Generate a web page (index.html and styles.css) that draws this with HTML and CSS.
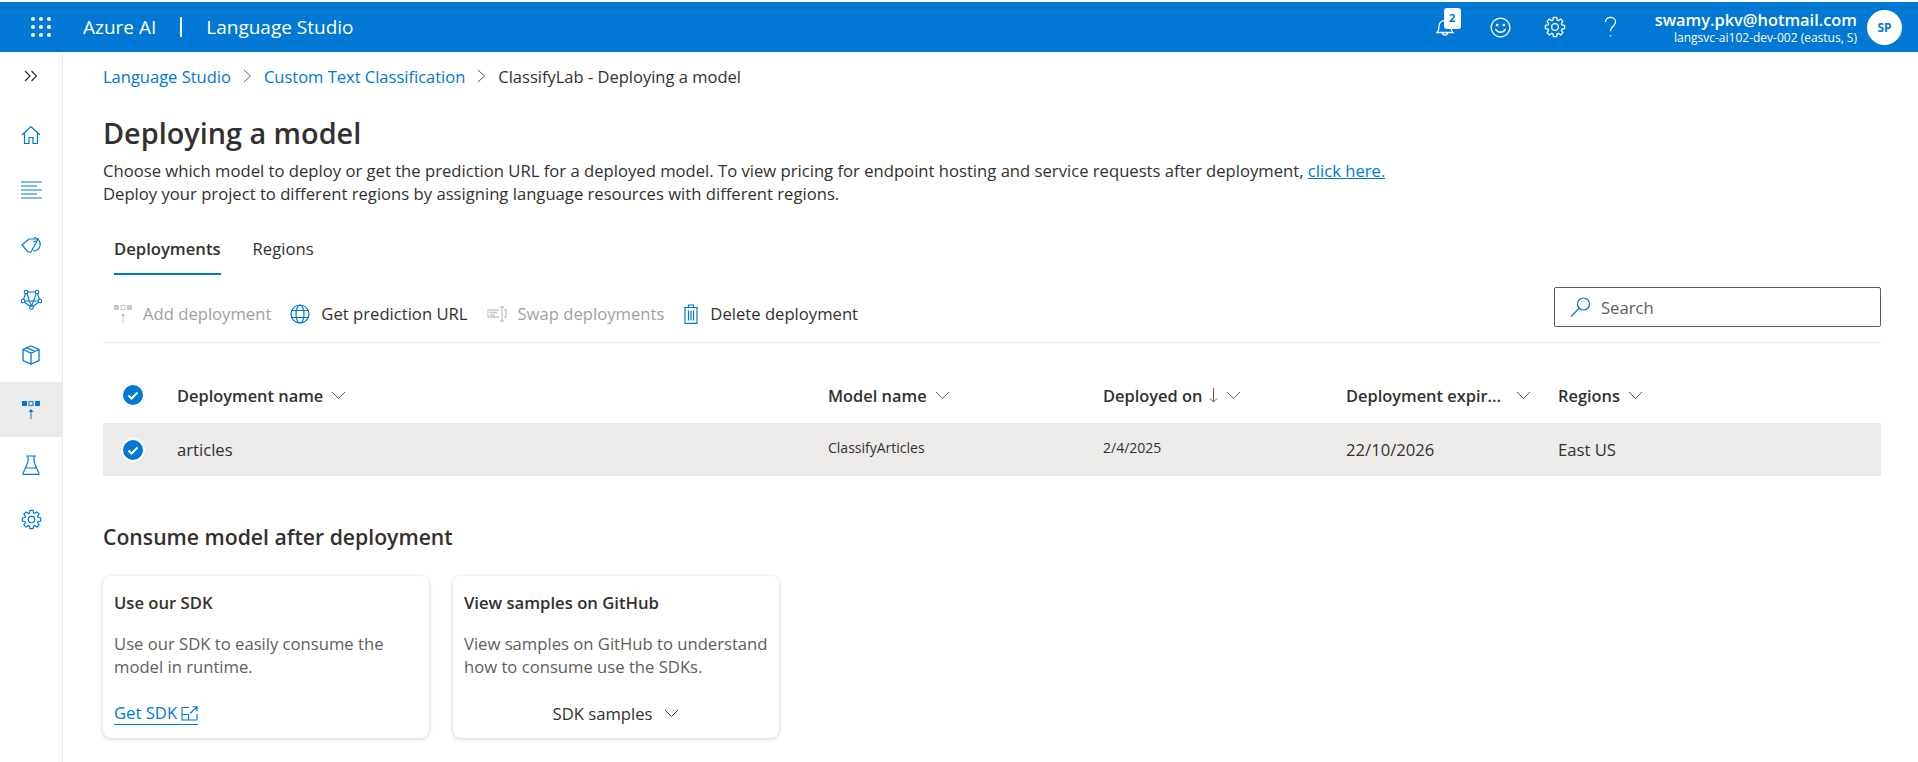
FILE: index.html
```html
<!DOCTYPE html>
<html lang="en">
<head>
  <meta charset="UTF-8">
  <title>Language Studio</title>
  <link rel="stylesheet" href="styles.css">
</head>
<body>
  <svg class="icon-defs" width="0" height="0">
    <symbol id="gear" viewBox="-13 -13 26 26">
      <polygon points="-2.49,-8.13 -2,-11.33 2,-11.33 2.49,-8.13 3.99,-7.51 6.6,-9.42 9.42,-6.6 7.51,-3.99 8.13,-2.49 11.33,-2 11.33,2 8.13,2.49 7.51,3.99 9.42,6.6 6.6,9.42 3.99,7.51 2.49,8.13 2,11.33 -2,11.33 -2.49,8.13 -3.99,7.51 -6.6,9.42 -9.42,6.6 -7.51,3.99 -8.13,2.49 -11.33,2 -11.33,-2 -8.13,-2.49 -7.51,-3.99 -9.42,-6.6 -6.6,-9.42 -3.99,-7.51" stroke-linejoin="round"/>
      <circle cx="0" cy="0" r="4"/>
    </symbol>
  </svg>

  <header class="topbar">
    <svg class="waffle" width="20" height="20" viewBox="0 0 20 20" fill="#fff">
      <circle cx="2" cy="2" r="2"/><circle cx="10" cy="2" r="2"/><circle cx="18" cy="2" r="2"/>
      <circle cx="2" cy="10" r="2"/><circle cx="10" cy="10" r="2"/><circle cx="18" cy="10" r="2"/>
      <circle cx="2" cy="18" r="2"/><circle cx="10" cy="18" r="2"/><circle cx="18" cy="18" r="2"/>
    </svg>
    <span class="brand">Azure AI</span>
    <span class="brand-sep"></span>
    <span class="brand">Language Studio</span>
    <div class="top-icons">
      <div class="top-icon bell">
        <svg width="18" height="20" viewBox="0 0 18 20" fill="none" stroke="#fff" stroke-width="1.300">
          <path d="M1 15.500c1.500-1.500 2-3.500 2-6 0-3.500 2.500-6 6-6s6 2.500 6 6c0 2.500.5 4.500 2 6z"/>
          <path d="M6.500 15.500c0 3.500 5 3.500 5 0"/>
        </svg>
        <span class="badge">2</span>
      </div>
      <div class="top-icon">
        <svg width="21" height="21" viewBox="0 0 22 22" fill="none" stroke="#fff" stroke-width="1.400">
          <circle cx="11" cy="11" r="9.800"/>
          <path d="M6 13c2.500 4 7.500 4 10 0" stroke-linecap="round"/>
          <circle cx="7.500" cy="8.500" r=".8" fill="#fff"/><circle cx="14.500" cy="8.500" r=".8" fill="#fff"/>
        </svg>
      </div>
      <div class="top-icon">
        <svg width="22" height="22" fill="none" stroke="#fff" stroke-width="1.500"><use href="#gear"/></svg>
      </div>
      <div class="top-icon">
        <svg width="13" height="22" viewBox="0 0 14 24" fill="none" stroke="#fff" stroke-width="1.400">
          <path d="M1.500 6.500C1.500 3.500 4 1.500 7 1.500s5.500 2 5.500 5c0 4.500-5.500 4.500-5.500 10"/>
          <circle cx="7" cy="21.500" r=".9" fill="#fff" stroke="none"/>
        </svg>
      </div>
    </div>
    <div class="account">
      <div class="account-mail">swamy.pkv@hotmail.com</div>
      <div class="account-res">langsvc-ai102-dev-002 (eastus, S)</div>
    </div>
    <div class="avatar">SP</div>
  </header>

  <div class="shell">
    <nav class="sidenav">
      <div class="nav-toggle">
        <svg width="14" height="12" viewBox="0 0 14 12" fill="none" stroke="#252423" stroke-width="1.100"><path d="M1 1l5 5-5 5M7.500 1l5 5-5 5"/></svg>
      </div>
      <div class="nav-item">
        <svg width="20" height="20" viewBox="0 0 20 20" fill="none" stroke="#0078d4" stroke-width="1.200"><path d="M1 10l9-8.500 9 8.500M3.500 8v10.500h4.500v-6h4v6h4.500V8"/></svg>
      </div>
      <div class="nav-item">
        <svg width="21" height="18" viewBox="0 0 21 18" stroke="#0078d4" stroke-width="1.100"><path d="M0 1h20.500M0 5h16M0 9h20.500M0 13h16M0 17h20.500"/></svg>
      </div>
      <div class="nav-item">
        <svg width="21" height="17" viewBox="0 0 21 17" fill="none" stroke="#0078d4" stroke-width="1.200"><path d="M1 9l7-6h9l-7 13h-3z"/><path d="M13 1.500a6 6 0 1 1-1 13.500M12.500 6l3-1"/></svg>
      </div>
      <div class="nav-item">
        <svg width="21" height="21" viewBox="0 0 21 21" fill="none" stroke="#0078d4" stroke-width="1.100"><circle cx="5" cy="3" r="1.800"/><circle cx="16" cy="3" r="1.800"/><circle cx="2" cy="12" r="1.800"/><circle cx="19" cy="12" r="1.800"/><circle cx="10.500" cy="18.500" r="1.800"/><path d="M6.500 3h8M4.500 4.800L2.500 10M16.500 4.800l2 5.200M3.500 13.200l5.500 4.300M17.500 13.200L12 17.500M3.800 12h13.400M5.800 4.500l4.700 13M15.200 4.500l-4.700 13"/></svg>
      </div>
      <div class="nav-item">
        <svg width="18" height="20" viewBox="0 0 18 20" fill="none" stroke="#0078d4" stroke-width="1.300"><path d="M9 1l8 3.500v11L9 19l-8-3.500v-11zM1 4.500L9 8l8-3.500M9 8v11M5 2.800l8 3.500"/></svg>
      </div>
      <div class="nav-item active">
        <svg width="18" height="18" viewBox="0 0 18 18" fill="#0078d4"><rect y="0" width="5" height="5"/><rect x="7" y=".6" width="4" height="3.800" fill="none" stroke="#0078d4"/><rect x="13" y="0" width="5" height="5"/><path d="M9 8l-2.500 3h2V18h1v-7h2z"/></svg>
      </div>
      <div class="nav-item">
        <svg width="18" height="20" viewBox="0 0 18 20" fill="none" stroke="#0078d4" stroke-width="1.200"><path d="M4 1h10M6 1v6L1 18.500c-.2.300 0 .9.500.9h15c.500 0 .7-.6.500-.9L12 7V1M3.500 13h11"/></svg>
      </div>
      <div class="nav-item">
        <svg width="21" height="21" fill="none" stroke="#0078d4" stroke-width="1.500"><use href="#gear"/></svg>
      </div>
    </nav>

    <main class="content">
      <div class="crumbs">
        <a class="crumb-link">Language Studio</a>
        <svg class="crumb-sep" width="9" height="14" viewBox="0 0 9 14" fill="none" stroke="#605e5c"><path d="M1 1l6.500 6L1 13"/></svg>
        <a class="crumb-link">Custom Text Classification</a>
        <svg class="crumb-sep" width="9" height="14" viewBox="0 0 9 14" fill="none" stroke="#605e5c"><path d="M1 1l6.500 6L1 13"/></svg>
        <span class="crumb-current">ClassifyLab - Deploying a model</span>
      </div>

      <h1 class="page-title">Deploying a model</h1>
      <p class="page-desc">Choose which model to deploy or get the prediction URL for a deployed model. To view pricing for endpoint hosting and service requests after deployment, <a class="link">click here.</a><br>Deploy your project to different regions by assigning language resources with different regions.</p>

      <div class="tabs">
        <div class="tab selected">Deployments</div>
        <div class="tab">Regions</div>
      </div>

      <div class="commandbar">
        <div class="cmd disabled">
          <svg width="18" height="18" viewBox="0 0 18 18" fill="#c8c6c4"><rect y="0" width="5" height="5"/><rect x="7" y=".6" width="4" height="3.800" fill="none" stroke="#c8c6c4"/><rect x="13" y="0" width="5" height="5"/><path d="M9 8l-2.500 3h2V18h1v-7h2z"/></svg>
          <span>Add deployment</span>
        </div>
        <div class="cmd">
          <svg width="20" height="20" viewBox="0 0 20 20" fill="none" stroke="#0078d4" stroke-width="1.200"><circle cx="10" cy="10" r="9"/><ellipse cx="10" cy="10" rx="4" ry="9"/><path d="M1.800 6.500h16.400M1.800 13.500h16.400"/></svg>
          <span>Get prediction URL</span>
        </div>
        <div class="cmd disabled">
          <svg width="20" height="16" viewBox="0 0 20 16" fill="none" stroke="#c8c6c4" stroke-width="1.300"><path d="M12 4H1v7h11M3 6.500h7M3 9h5M15 1v14M13 1h4M13 15h4M17 4h2v7h-2"/></svg>
          <span>Swap deployments</span>
        </div>
        <div class="cmd">
          <svg width="16" height="20" viewBox="0 0 16 20" fill="none" stroke="#0078d4" stroke-width="1.200"><path d="M1 3.500h14M5.500 3.500V1h5v2.500M2 3.500v15.800h12V3.500M5.500 6.500v10M8 6.500v10M10.500 6.500v10"/></svg>
          <span>Delete deployment</span>
        </div>
        <div class="searchbox">
          <svg width="21" height="20" viewBox="0 0 21 20" fill="none" stroke="#0078d4" stroke-width="1.200"><circle cx="13.500" cy="7" r="6"/><path d="M9 11.500L1 19.500"/></svg>
          <span>Search</span>
        </div>
      </div>

      <div class="grid-row grid-head">
        <div class="check">
          <svg width="20" height="20" viewBox="0 0 20 20"><circle cx="10" cy="10" r="10" fill="#0078d4"/><path d="M5.500 10.500l3 3 6-6" fill="none" stroke="#fff" stroke-width="2"/></svg>
        </div>
        <div class="col-head">Deployment name <svg class="chev" width="15" height="9" viewBox="0 0 15 9" fill="none" stroke="#605e5c"><path d="M1 1l6.500 6.500L14 1"/></svg></div>
        <div class="col-head">Model name <svg class="chev" width="15" height="9" viewBox="0 0 15 9" fill="none" stroke="#605e5c"><path d="M1 1l6.500 6.500L14 1"/></svg></div>
        <div class="col-head">Deployed on
          <svg class="sort-arrow" width="9" height="16" viewBox="0 0 9 16" fill="none" stroke="#605e5c"><path d="M4.500 1v14M1 11.500L4.500 15 8 11.500"/></svg>
          <svg class="chev" width="15" height="9" viewBox="0 0 15 9" fill="none" stroke="#605e5c"><path d="M1 1l6.500 6.500L14 1"/></svg></div>
        <div class="col-head col-expiry">Deployment expir... <svg class="chev" width="15" height="9" viewBox="0 0 15 9" fill="none" stroke="#605e5c"><path d="M1 1l6.500 6.500L14 1"/></svg></div>
        <div class="col-head">Regions <svg class="chev" width="15" height="9" viewBox="0 0 15 9" fill="none" stroke="#605e5c"><path d="M1 1l6.500 6.500L14 1"/></svg></div>
      </div>
      <div class="grid-row grid-item">
        <div class="check">
          <svg width="24" height="24" viewBox="0 0 24 24"><circle cx="12" cy="12" r="12" fill="#fff"/><circle cx="12" cy="12" r="10" fill="#0078d4"/><path d="M7.500 12.500l3 3 6-6" fill="none" stroke="#fff" stroke-width="2"/></svg>
        </div>
        <div>articles</div>
        <div class="cell-small">ClassifyArticles</div>
        <div class="cell-small">2/4/2025</div>
        <div>22/10/2026</div>
        <div>East US</div>
      </div>

      <h2 class="section-title">Consume model after deployment</h2>
      <div class="cards">
        <div class="card">
          <div class="card-title">Use our SDK</div>
          <div class="card-text">Use our SDK to easily consume the model in runtime.</div>
          <a class="card-action sdk-link">Get SDK <svg width="17" height="15" viewBox="0 0 17 15" fill="none" stroke="#0078d4" stroke-width="1.100"><path d="M8 1.500H1V14h15V8M1 8.500h6.500V14M9 7.500L16 .8M11.500.8H16V5"/></svg></a>
        </div>
        <div class="card">
          <div class="card-title">View samples on GitHub</div>
          <div class="card-text">View samples on GitHub to understand how to consume use the SDKs.</div>
          <div class="card-action center">SDK samples <svg class="chev" width="15" height="9" viewBox="0 0 15 9" fill="none" stroke="#323130"><path d="M1 1l6.500 6.500L14 1"/></svg></div>
        </div>
      </div>
    </main>
  </div>
</body>
</html>
```

FILE: styles.css
```css
* {
  box-sizing: border-box;
}
html, body {
  height: 100%;
}
body {
  margin: 0;
  padding-top: 2px;
  font-family: "Open Sans", "Noto Sans", Arial, sans-serif;
  font-size: 16.65px;
  color: #323130;
  background: #fff;
  overflow: hidden;
}
.icon-defs {
  display: none;
}

/* top bar */
.topbar {
  height: 50px;
  background: #0078d4;
  color: #fff;
  display: flex;
  align-items: center;
  padding-left: 31px;
}
.waffle {
  margin-right: 32px;
}
.brand {
  font-size: 19px;
}
.brand-sep {
  width: 2px;
  height: 20px;
  background: #fff;
  margin: 0 24px 0 24px;
}
.top-icons {
  margin-left: auto;
  display: flex;
  align-items: center;
  margin-right: 17px;
}
.top-icon {
  width: 55px;
  display: flex;
  justify-content: center;
  align-items: center;
  position: relative;
}
.badge {
  position: absolute;
  top: -9px;
  left: 26px;
  width: 17px;
  height: 21px;
  background: #fff;
  color: #0078d4;
  border-radius: 3px;
  font-size: 11px;
  font-weight: 700;
  text-align: center;
  line-height: 20px;
}
.account {
  text-align: right;
  margin-right: 10px;
}
.account-mail {
  font-size: 16.4px;
  font-weight: 600;
  line-height: 20px;
}
.account-res {
  font-size: 12px;
  line-height: 15px;
}
.avatar {
  width: 35px;
  height: 35px;
  border-radius: 50%;
  background: #fff;
  color: #0078d4;
  font-size: 12px;
  font-weight: 700;
  display: flex;
  align-items: center;
  justify-content: center;
  margin-right: 16px;
}

/* left nav */
.shell {
  display: flex;
  height: 710px;
}
.sidenav {
  width: 63px;
  border-right: 1px solid #edebe9;
  flex-shrink: 0;
}
.nav-toggle {
  height: 48px;
  display: flex;
  align-items: center;
  justify-content: center;
  margin-bottom: 7px;
}
.nav-item {
  height: 55px;
  display: flex;
  align-items: center;
  justify-content: center;
}
.nav-item.active {
  background: #edebe9;
}

/* main content */
.content {
  flex: 1;
  padding: 0 37px 0 40px;
}
.crumbs {
  height: 48px;
  display: flex;
  align-items: center;
  font-size: 16.5px;
}
.crumb-link {
  color: #0078d4;
}
.crumb-sep {
  margin: 0 12px 0 12px;
}
.page-title {
  margin: 14px 0 0;
  font-size: 28.8px;
  font-weight: 600;
  line-height: 38px;
}
.page-desc {
  margin: 7px 0 0;
  line-height: 23px;
}
.link {
  color: #0078d4;
  text-decoration: underline;
}

.tabs {
  display: flex;
  margin-top: 22px;
  gap: 32px;
  padding-left: 11px;
}
.tab {
  height: 48px;
  line-height: 43px;
}
.tab.selected {
  font-weight: 600;
  border-bottom: 2px solid #0078d4;
}

.commandbar {
  height: 68px;
  display: flex;
  align-items: center;
  gap: 19px;
  padding: 10px 0 0 11px;
  border-bottom: 1px solid #edebe9;
}
.cmd {
  display: flex;
  align-items: center;
  gap: 11px;
}
.cmd.disabled {
  color: #a19f9d;
}
.searchbox {
  margin: 2px 0 0 auto;
  align-self: flex-start;
  width: 327px;
  height: 40px;
  border: 1px solid #605e5c;
  border-radius: 2px;
  display: flex;
  align-items: center;
  gap: 10px;
  padding-left: 15px;
  color: #605e5c;
}

/* list */
.grid-row {
  display: grid;
  grid-template-columns: 74px 651px 275px 243px 212px 1fr;
  align-items: center;
}
.grid-head {
  height: 80px;
  padding-top: 24px;
}
.grid-item {
  height: 53px;
  background: #edebe9;
}
.check {
  padding-left: 20px;
  display: flex;
}
.grid-item .check {
  padding-left: 18px;
}
.col-head {
  font-weight: 600;
  font-size: 16.4px;
  display: flex;
  align-items: center;
}
.chev {
  margin-left: 8px;
}
.sort-arrow {
  margin-left: 7px;
}
.col-expiry .chev {
  margin-left: 15px;
}
.cell-small {
  font-size: 14px;
  margin-top: -4px;
}

/* bottom cards */
.section-title {
  margin: 47px 0 0;
  font-size: 21.2px;
  font-weight: 600;
  line-height: 27px;
}
.cards {
  display: flex;
  gap: 24px;
  margin-top: 26px;
}
.card {
  width: 326px;
  height: 162px;
  border-radius: 8px;
  padding: 15px 11px 13px;
  box-shadow: 0 1px 4px rgba(0, 0, 0, 0.2);
  display: flex;
  flex-direction: column;
}
.card-title {
  font-weight: 600;
  line-height: 24px;
}
.card-text {
  margin-top: 17px;
  line-height: 23px;
  color: #605e5c;
}
.card-action {
  margin-top: auto;
  display: flex;
  align-items: center;
  gap: 4px;
}
.sdk-link {
  color: #0078d4;
  width: fit-content;
  border-bottom: 1px solid #0078d4;
  line-height: 22px;
}
.card-action.center {
  justify-content: center;
}
```
